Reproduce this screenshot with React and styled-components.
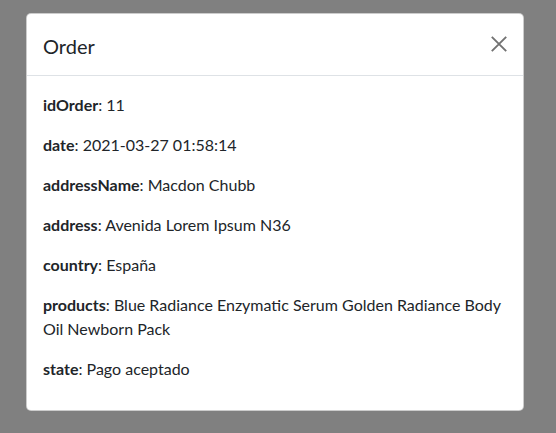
import React from "react";
import styled, { createGlobalStyle } from "styled-components";

const Global = createGlobalStyle`
  html, body { margin: 0; padding: 0; }
  body {
    background: #808080;
    font-family: "Lato", "Noto Sans", sans-serif;
    color: #212529;
    height: 433px;
    overflow: hidden;
  }
`;

const Backdrop = styled.div`
  padding: 13px 0 0 26px;
`;

const Dialog = styled.div`
  width: 498px;
  box-sizing: border-box;
  background: #fff;
  border: 1px solid rgba(0, 0, 0, 0.2);
  border-radius: 5px;
`;

const Header = styled.div`
  display: flex;
  align-items: center;
  justify-content: space-between;
  padding: 17px 16px 14px 16px;
  border-bottom: 1px solid #dee2e6;
`;

const Title = styled.h5`
  margin: 0;
  font-size: 20px;
  font-weight: 400;
  line-height: 30px;
`;

const Close = styled.button`
  border: 0;
  background: transparent;
  padding: 0;
  width: 16px;
  height: 16px;
  display: flex;
  align-items: center;
  justify-content: center;
  margin: -4px 0 0 0;
  opacity: 0.55;
`;

const Body = styled.div`
  padding: 17px 16px 16px 16px;
`;

const Field = styled.p`
  margin: 0 0 16px 0;
  font-size: 16px;
  line-height: 24px;
  &:last-child { margin-bottom: 13px; }
`;

const Key = styled.b`
  font-weight: 700;
`;

const rows = [
  ["idOrder", "11"],
  ["date", "2021-03-27 01:58:14"],
  ["addressName", "Macdon Chubb"],
  ["address", "Avenida Lorem Ipsum N36"],
  ["country", "España"],
  ["products", "Blue Radiance Enzymatic Serum Golden Radiance Body Oil Newborn Pack"],
  ["state", "Pago aceptado"],
];

export default function App() {
  return (
    <>
      <Global />
      <Backdrop>
        <Dialog>
          <Header>
            <Title>Order</Title>
            <Close aria-label="Close">
              <svg width="16" height="16" viewBox="0 0 16 16">
                <path d="M0.8 0.8 L15.2 15.2 M15.2 0.8 L0.8 15.2" stroke="#000" strokeWidth="1.9" fill="none" />
              </svg>
            </Close>
          </Header>
          <Body>
            {rows.map(([k, v]) => (
              <Field key={k}>
                <Key>{k}</Key>: {v}
              </Field>
            ))}
          </Body>
        </Dialog>
      </Backdrop>
    </>
  );
}
